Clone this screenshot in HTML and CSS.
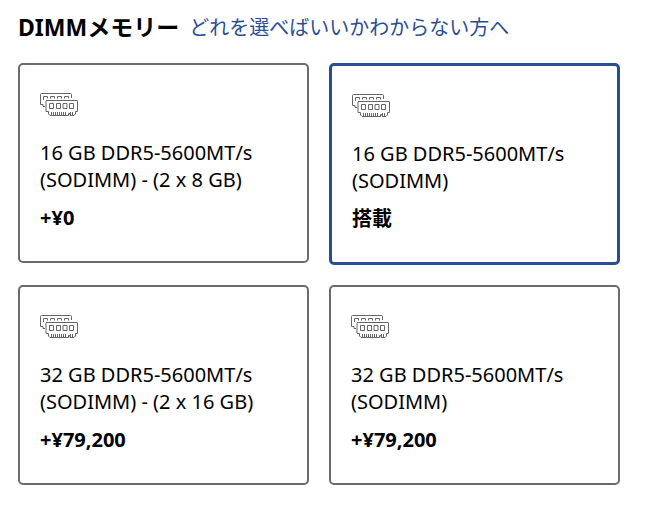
FILE: index.html
```html
<!DOCTYPE html>
<html lang="ja">
<head>
  <meta charset="UTF-8">
  <meta name="viewport" content="width=device-width, initial-scale=1">
  <title>DIMMメモリー</title>
  <link rel="stylesheet" href="styles.css">
</head>
<body>
  <!-- Shared memory module icon -->
  <svg class="sprite" aria-hidden="true">
    <symbol id="memory" viewBox="0 0 38 40">
      <path d="M31.5 13V9.500q0-1-1-1h-29q-1 0-1 1v10h2.500v2h2M3.500 15v-3.500h4v2M10.500 13.500v-2h4v2M17.500 13.500v-2h4v2M24.500 13.500v-2h4v2"/>
      <path d="M6 15.500h31q.5 0 .5.500v10.500h-2v2.500l-1.500 1.500h-4v-2h-1.500v2h-18.500l-1.500-1.500v-2.500h-2.500v-10.500q0-.5.500-.5z"/>
      <path d="M9.500 18.500h4v5h-4zM16.500 18.500h4v5h-4zM23 18.500h4v5h-4zM29.500 18.500h4v5h-4z"/>
      <path d="M11.500 27v3M13.500 27v3M15.500 27v3M17.500 27v3M19.500 27v3M21.500 27v3M23.500 27v3M25.500 27v3M30.500 27v3M32.500 27v3"/>
    </symbol>
  </svg>

  <main class="container">
    <div class="header">
      <h2 class="title">DIMMメモリー</h2>
      <a class="help-link" href="#">どれを選べばいいかわからない方へ</a>
    </div>

    <div class="options">
      <button class="option" type="button" aria-pressed="false">
        <svg class="icon" aria-hidden="true"><use href="#memory"/></svg>
        <span class="name">16 GB DDR5-5600MT/s (SODIMM) - (2 x 8 GB)</span>
        <span class="price">+¥0</span>
      </button>
      <button class="option selected" type="button" aria-pressed="true">
        <svg class="icon" aria-hidden="true"><use href="#memory"/></svg>
        <span class="name">16 GB DDR5-5600MT/s (SODIMM)</span>
        <span class="price">搭載</span>
      </button>
      <button class="option" type="button" aria-pressed="false">
        <svg class="icon" aria-hidden="true"><use href="#memory"/></svg>
        <span class="name">32 GB DDR5-5600MT/s (SODIMM) - (2 x 16 GB)</span>
        <span class="price">+¥79,200</span>
      </button>
      <button class="option" type="button" aria-pressed="false">
        <svg class="icon" aria-hidden="true"><use href="#memory"/></svg>
        <span class="name">32 GB DDR5-5600MT/s (SODIMM)</span>
        <span class="price">+¥79,200</span>
      </button>
    </div>
  </main>
</body>
</html>
```
FILE: styles.css
```css
body {
  margin: 0;
  background-color: #fff;
  color: #000;
  font-family: "Noto Sans", "Noto Sans CJK JP", sans-serif;
  font-size: 20px;
  line-height: 27px;
}
.sprite {
  display: none;
}
.container {
  padding: 12px 32px 20px 18px;
}
.header {
  display: flex;
  align-items: center;
  gap: 10px;
  height: 30px;
  margin-bottom: 21px;
}
.title {
  margin: 0;
  font-size: 23px;
  font-weight: 700;
}
.help-link {
  color: #294e95;
  text-decoration: none;
}
.help-link:hover {
  text-decoration: underline;
}
.options {
  display: grid;
  grid-template-columns: 1fr 1fr;
  align-items: start;
  gap: 20px;
}
.option {
  display: flex;
  flex-direction: column;
  align-items: flex-start;
  padding: 20px 20px 30px;
  border: 2px solid #6e6872;
  border-radius: 5px;
  background-color: #fff;
  color: #000;
  font: inherit;
  text-align: left;
  cursor: pointer;
}
.option.selected {
  border: 3px solid #294e95;
}
.icon {
  width: 38px;
  height: 40px;
  margin-bottom: 14px;
  fill: none;
  stroke: #666;
  stroke-width: 1;
}
.name {
  margin-bottom: 11px;
}
.price {
  font-weight: 700;
}
```
